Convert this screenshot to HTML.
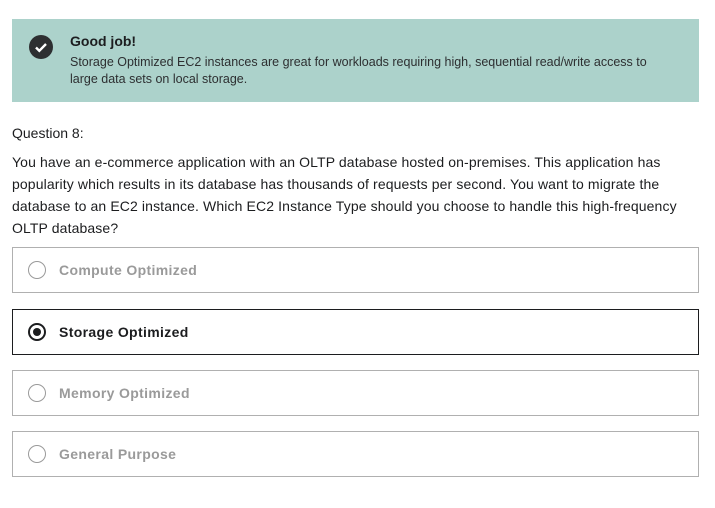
<!DOCTYPE html>
<html><head><style>
body{margin:0;background:#fff;font-family:"Liberation Sans",sans-serif;color:#1c1d1f;}
.banner{position:absolute;left:12px;top:19px;width:687px;height:83px;background:#acd2cb;}
.ic{position:absolute;left:29px;top:35px;width:24px;height:24px;border-radius:50%;background:#2d2f31;}
.t{position:absolute;left:70px;top:33px;font-weight:bold;font-size:14px;}
.d{position:absolute;left:70px;top:54px;font-size:12.5px;line-height:17px;width:595px;color:#2d2f31;}
.q{position:absolute;left:12px;top:125px;font-size:14px;}
.p{position:absolute;left:12px;top:151px;font-size:14px;line-height:22px;width:690px;letter-spacing:0.12px;}
.o{position:absolute;left:12px;width:685px;height:44px;border:1px solid #b0b0b0;box-sizing:content-box;}
.o.s{border-color:#1c1d1f;}
.r{position:absolute;left:15px;top:13px;width:16px;height:16px;border:1px solid #9a9a9a;border-radius:50%;}
.o.s .r{border:2px solid #1c1d1f;width:14px;height:14px;}
.o.s .r:after{content:"";position:absolute;left:3px;top:3px;width:8px;height:8px;border-radius:50%;background:#1c1d1f;}
.l{position:absolute;left:46px;top:14px;font-size:14px;font-weight:bold;color:#9a9a9a;letter-spacing:0.35px;}
.o.s .l{color:#1c1d1f;}
</style></head><body>
<div class="banner"></div>
<div class="ic"><svg width="24" height="24"><path d="M7 12.5l3.3 3.3L17 9" fill="none" stroke="#fff" stroke-width="2.4"/></svg></div>
<div class="t">Good job!</div>
<div class="d">Storage Optimized EC2 instances are great for workloads requiring high, sequential read/write access to large data sets on local storage.</div>
<div class="q">Question 8:</div>
<div class="p">You have an e-commerce application with an OLTP database hosted on-premises. This application has popularity which results in its database has thousands of requests per second. You want to migrate the database to an EC2 instance. Which EC2 Instance Type should you choose to handle this high-frequency OLTP database?</div>
<div class="o" style="top:247px"><div class="r"></div><div class="l">Compute Optimized</div></div>
<div class="o s" style="top:309px"><div class="r"></div><div class="l">Storage Optimized</div></div>
<div class="o" style="top:370px"><div class="r"></div><div class="l">Memory Optimized</div></div>
<div class="o" style="top:431px"><div class="r"></div><div class="l">General Purpose</div></div>
</body></html>
